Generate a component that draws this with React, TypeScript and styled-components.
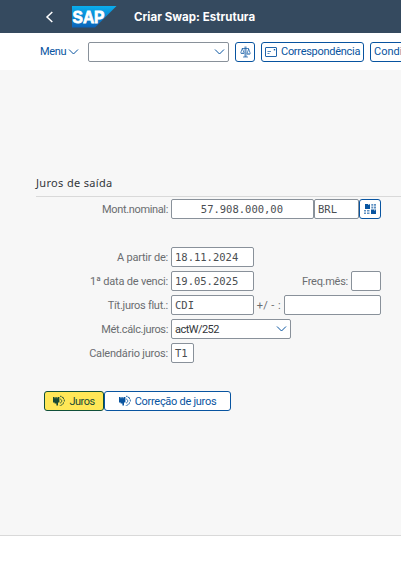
import React from "react";
import styled, { createGlobalStyle } from "styled-components";

const Global = createGlobalStyle`
  * { box-sizing: border-box; }
  body { margin: 0; background: #fff; font-family: Roboto, "Liberation Sans", sans-serif; font-size: 11px; color: #32363a; overflow: hidden; }
  svg { display: block; flex: none; }
`;
const Page = styled.div`width: 401px; height: 564px; overflow: hidden; background: #fff;`;
const ShellBar = styled.header`
  height: 33px; background: #354a5f; display: flex; align-items: center; padding-left: 45px;
`;
const Logo = styled.svg`margin-left: 18px;`;
const LogoText = styled.text`font: bold 17px "Liberation Sans", sans-serif; fill: #fff; stroke: #fff; stroke-width: 0.8px;`;
const Title = styled.h1`
  margin: 0 0 0 17px; color: #fff; font: bold 11.5px/16px Inter, sans-serif; white-space: nowrap;
  letter-spacing: 0.04px;
`;
const Toolbar = styled.nav`
  height: 37px; display: flex; align-items: center; padding-left: 40px; white-space: nowrap;
`;
const Menu = styled.div`
  width: 48px; flex: none; display: flex; align-items: center; gap: 2px;
  color: #0854a0; letter-spacing: -0.35px;
`;
const Field = styled.div<{ $w: number }>`
  width: ${(p) => p.$w}px; height: 20px; flex: none; display: flex; align-items: center;
  padding: 0 3px; background: #fff; border: 1px solid #89919a; border-radius: 2px;
`;
const Mono = styled(Field)<{ $right?: number }>`
  font: 10.5px/18px "DejaVu Sans Mono", monospace; color: #4a4e52; white-space: pre;
  justify-content: ${(p) => (p.$right ? "flex-end" : "flex-start")};
  padding-right: ${(p) => p.$right ?? 0}px;
`;
const Select = styled(Field)`justify-content: space-between;`;
const Button = styled.button<{ $w: number; $left?: number; $hot?: boolean; $start?: boolean }>`
  width: ${(p) => p.$w}px; height: 20px; flex: none; margin: 0 0 0 ${(p) => p.$left ?? 0}px;
  padding: 0 0 0 ${(p) => (p.$start ? 3 : 0)}px;
  display: flex; align-items: center; justify-content: ${(p) => (p.$start ? "flex-start" : "center")}; gap: 4px;
  font: inherit; white-space: nowrap; border-radius: 3px;
  color: ${(p) => (p.$hot ? "#174a35" : "#0854a0")};
  background: ${(p) => (p.$hot ? "#ffe757" : "#fff")};
  border: 1px solid ${(p) => (p.$hot ? "#10503a" : "#0854a0")};
`;
const Content = styled.main`
  height: 466px; padding-top: 105px; background: #f7f7f7; border-bottom: 1px solid #d9d9d9;
`;
const Section = styled.h2`
  margin: 0 0 2px 36px; height: 22px; border-bottom: 1px solid #d9d9d9;
  font: 11px/15px "Noto Sans", sans-serif; letter-spacing: 0.33px; color: #32363a;
`;
const Row = styled.div<{ $gap?: number }>`height: 20px; display: flex; margin-bottom: ${(p) => p.$gap ?? 4}px;`;
const Label = styled.label<{ $w?: number; $s?: number }>`
  width: ${(p) => p.$w ?? 171}px; padding-right: 3px; flex: none; text-align: right;
  line-height: 21px; color: #6a6d70; white-space: pre; letter-spacing: ${(p) => p.$s ?? -0.27}px;
`;
const Text = styled.span<{ $s?: number }>`letter-spacing: ${(p) => p.$s ?? -0.28}px;`;
const Actions = styled.div`display: flex; padding: 28px 0 0 44px;`;

const Chevron = () => (
  <svg width="11" height="8" viewBox="0 0 11 8" fill="none" stroke="#0854a0"><path d="M1 1.5l4.5 4.5L10 1.5" /></svg>
);
const Scale = () => (
  <svg width="11" height="12" viewBox="0 0 11 12" fill="none" stroke="#0854a0" strokeWidth=".7">
    <path d="M5 .5v10.5M6 .5v10.5M2 2.5h7M3 11h5M2.3 2.5L.7 6.7M2.3 2.5L4 6.7M8.7 3L7 7.5M8.7 3l1.6 4.5" />
    <path d="M.5 6.7h3.7v1H1zM6.7 7.6h3.8l-.6 1H7z" fill="#0854a0" stroke="none" />
  </svg>
);
const Letter = () => (
  <svg width="12" height="10" viewBox="0 0 12 10" fill="none" stroke="#0854a0" strokeWidth=".9">
    <rect x=".5" y=".5" width="11" height="9" rx=".5" /><path d="M2.5 4.5H6M2.5 6.5h2" strokeWidth=".7" />
    <path d="M8.8 2h1.4v1.4H8.8z" fill="#0854a0" stroke="none" />
  </svg>
);
const Tiles = () => (
  <svg width="12" height="10" viewBox="0 0 12 10" fill="#0854a0">
    <path d="M1 0h5v5H1zM7 5.5h5V10H7z" />
    <path d="M7.3 0h2v1.8h-2zM10 0h2v1.8h-2zM7.3 2.6h2v1.8h-2zM10 2.6h2v1.8h-2zM0 6h2v1.6H0zM3 6h2.5v1.6H3zM0 8.4h2V10H0zM3 8.4h2.5V10H3z" opacity=".65" />
    <path d="M4.3 0h1v1h-1zM10.2 5.5h1v1h-1z" fill="#fff" />
  </svg>
);
const Gear = () => (
  <svg width="12" height="12" viewBox="0 0 12 12" fill="currentColor">
    <path d="M0 2h1.6v1.2h.8V2h1.3v1.2h.8V2H6.4v5.6H5V10.5H3.4V8.6H1.6V7.6H0z" />
    <path d="M7 1.3h1.4l.6 1 1.5.2v1.4l.8.8v2l-.8.8-.2 1.4-1.3.3-.8 1.3H6.8" fill="none" stroke="currentColor" strokeWidth=".9" strokeDasharray="1.6 .5" />
    <path d="M7 4.1c2.3 0 2.3 3.8 0 3.8" fill="none" stroke="currentColor" strokeWidth=".8" />
  </svg>
);

export default function App() {
  return (
    <Page>
      <Global />
      <ShellBar>
        <svg width="9" height="12" viewBox="0 0 9 12" fill="none" stroke="#fff" strokeWidth="1.5"><path d="M7.3 1L2 6l5.3 5" /></svg>
        <Logo width="45" height="22" viewBox="0 0 45 22">
          <defs><linearGradient id="sap" x2="0" y2="1"><stop stopColor="#0aaeee" /><stop offset="1" stopColor="#0b62b8" /></linearGradient></defs>
          <path d="M0 0h44.5L23 21.5H0z" fill="url(#sap)" />
          <LogoText x=".5" y="17" textLength="32" lengthAdjust="spacingAndGlyphs">SAP</LogoText>
        </Logo>
        <Title>Criar Swap: Estrutura</Title>
      </ShellBar>
      <Toolbar>
        <Menu>Menu<Chevron /></Menu>
        <Select $w={141}><span /><Chevron /></Select>
        <Button $w={20} $left={6} aria-label="Comparar"><Scale /></Button>
        <Button $w={103} $left={6} $start><Letter /><Text>Correspondência</Text></Button>
        <Button $w={70} $left={6} $start><Text $s={0}>Condi</Text></Button>
      </Toolbar>
      <Content>
        <Section>Juros de saída</Section>
        <Row $gap={28}>
          <Label $s={-0.35}>Mont.nominal:</Label>
          <Mono $w={143} $right={30}>57.908.000,00</Mono>
          <Mono $w={45}>BRL</Mono>
          <Button $w={22} aria-label="Detalhes"><Tiles /></Button>
        </Row>
        <Row><Label $s={-0.2}>A partir de:</Label><Mono $w={83}>18.11.2024</Mono></Row>
        <Row>
          <Label $s={-0.2}>1ª data de venci:</Label><Mono $w={83}>19.05.2025</Mono>
          <Label $w={97}>Freq.mês:</Label><Mono $w={30} />
        </Row>
        <Row>
          <Label>Tít.juros flut.:</Label><Mono $w={83}>CDI</Mono>
          <Label $w={30} $s={0.4}>+/ - :</Label><Mono $w={97} />
        </Row>
        <Row><Label $s={-0.35}>Mét.cálc.juros:</Label><Select $w={120}><Text $s={-0.55}>actW/252</Text><Chevron /></Select></Row>
        <Row $gap={0}><Label $s={-0.2}>Calendário juros:</Label><Mono $w={23}>T1</Mono></Row>
        <Actions>
          <Button $w={60} $hot><Gear /><Text $s={-0.5}>Juros</Text></Button>
          <Button $w={127}><Gear /><Text>Correção de juros</Text></Button>
        </Actions>
      </Content>
    </Page>
  );
}
